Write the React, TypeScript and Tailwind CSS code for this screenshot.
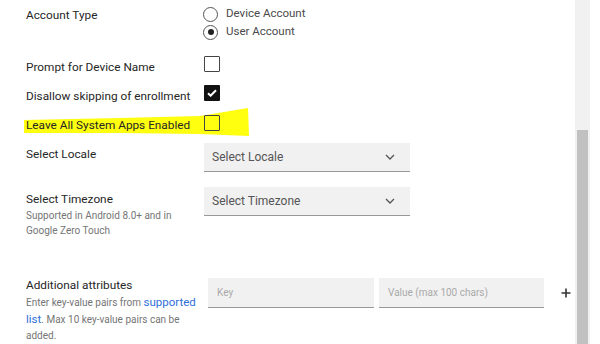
import React from "react";

const font = { fontFamily: "Roboto, 'Liberation Sans', Arial, sans-serif" };

function Radio({ checked, label }: { checked?: boolean; label: string }) {
  return (
    <div className="flex items-center h-[18px]">
      <div className="w-[15px] h-[15px] rounded-full border border-[#555] flex items-center justify-center">
        {checked && <div className="w-[6px] h-[6px] rounded-full bg-[#222]" />}
      </div>
      <span className="ml-[8px] text-[11.5px] text-[#4a4a4a]">{label}</span>
    </div>
  );
}

function Checkbox({ checked }: { checked?: boolean }) {
  if (checked) {
    return (
      <div className="w-[16px] h-[16px] bg-[#111] flex items-center justify-center rounded-[1px]">
        <svg width="10" height="8" viewBox="0 0 10 8">
          <path d="M1 4.2l2.6 2.5L9 1.2" fill="none" stroke="#fff" strokeWidth="2" />
        </svg>
      </div>
    );
  }
  return <div className="w-[16px] h-[16px] border border-[#444] rounded-[1px]" />;
}

function Chevron() {
  return (
    <svg width="10" height="6" viewBox="0 0 10 6">
      <path d="M1 1l4 4 4-4" fill="none" stroke="#555" strokeWidth="1.3" />
    </svg>
  );
}

function Select({ text }: { text: string }) {
  return (
    <div className="w-[206px] h-[29px] bg-[#f1f1f1] border-b-[1.5px] border-[#999] flex items-center justify-between pl-[8px] pr-[15px]">
      <span className="text-[12px] text-[#555]">{text}</span>
      <Chevron />
    </div>
  );
}

export default function App() {
  return (
    <div className="relative w-[600px] h-[344px] overflow-hidden bg-white flex" style={font}>
      <svg className="absolute left-0 top-0 pointer-events-none" width="600" height="344">
        <polygon
          points="24,120 120,118 200,116 230,111 248,108 249,136 200,134 120,133 24,133"
          fill="#ffff10"
        />
      </svg>
      <div className="relative flex-1 pl-[26px] text-[11.8px] text-[#262626]">
        {/* Account type */}
        <div className="flex h-[50px]">
          <div className="w-[178px] pt-[6px] leading-[18px]">Account Type</div>
          <div className="pt-[5px] -ml-[1px]">
            <Radio label="Device Account" />
            <Radio label="User Account" checked />
          </div>
        </div>
        {/* Prompt */}
        <div className="flex h-[30px]">
          <div className="w-[178px] pt-[8px] leading-[18px]">Prompt for Device Name</div>
          <div className="pt-[6px]">
            <Checkbox />
          </div>
        </div>
        {/* Disallow */}
        <div className="flex h-[30px]">
          <div className="w-[178px] pt-[7px] leading-[18px]">Disallow skipping of enrollment</div>
          <div className="pt-[5px]">
            <Checkbox checked />
          </div>
        </div>
        {/* Leave all */}
        <div className="flex h-[30px]">
          <div className="w-[178px] pt-[6px] leading-[18px]">Leave All System Apps Enabled</div>
          <div className="pt-[5px]">
            <Checkbox />
          </div>
        </div>
        {/* Locale */}
        <div className="flex h-[40px]">
          <div className="w-[178px] pt-[5px] leading-[18px]">Select Locale</div>
          <div className="pt-[3px]">
            <Select text="Select Locale" />
          </div>
        </div>
        {/* Timezone */}
        <div className="flex h-[70px]">
          <div className="w-[178px] pt-[10px]">
            <div className="leading-[18px]">Select Timezone</div>
            <div className="text-[10px] leading-[15px] text-[#757575]">
              Supported in Android 8.0+ and in
              <br />
              Google Zero Touch
            </div>
          </div>
          <div className="pt-[7px]">
            <Select text="Select Timezone" />
          </div>
        </div>
        {/* Additional attributes */}
        <div className="flex h-[94px]">
          <div className="w-[178px] pt-[26px]">
            <div className="leading-[18px]">Additional attributes</div>
            <div className="text-[10px] leading-[16px] text-[#757575]">
              Enter key-value pairs from{" "}
              <span className="text-[11.5px] text-[#2f6fd8]">supported</span>
              <br />
              <span className="text-[11.5px] text-[#2f6fd8]">list</span>. Max 10 key-value pairs can be
              <br />
              added.
            </div>
          </div>
          <div className="pt-[28px] pl-[4px] flex items-start">
            <div className="w-[166px] h-[30px] bg-[#f1f1f1] border-b-[1.5px] border-[#999] flex items-center pl-[9px]">
              <span className="text-[10px] text-[#aaa]">Key</span>
            </div>
            <div className="ml-[5px] w-[165px] h-[30px] bg-[#f1f1f1] border-b-[1.5px] border-[#999] flex items-center pl-[9px]">
              <span className="text-[10px] text-[#aaa]">Value (max 100 chars)</span>
            </div>
            <div className="ml-[17px] h-[30px] flex items-center">
              <svg width="10" height="10" viewBox="0 0 10 10">
                <path d="M5 0.5v9M0.5 5h9" stroke="#333" strokeWidth="1.6" />
              </svg>
            </div>
          </div>
        </div>
      </div>
      {/* scrollbar */}
      <div className="w-[15px] h-full bg-[#f1f1f1] px-[2px] pt-[130px]">
        <div className="w-full h-full bg-[#c1c1c1]" />
      </div>
      <div className="w-[10px] h-full bg-white" />
    </div>
  );
}
